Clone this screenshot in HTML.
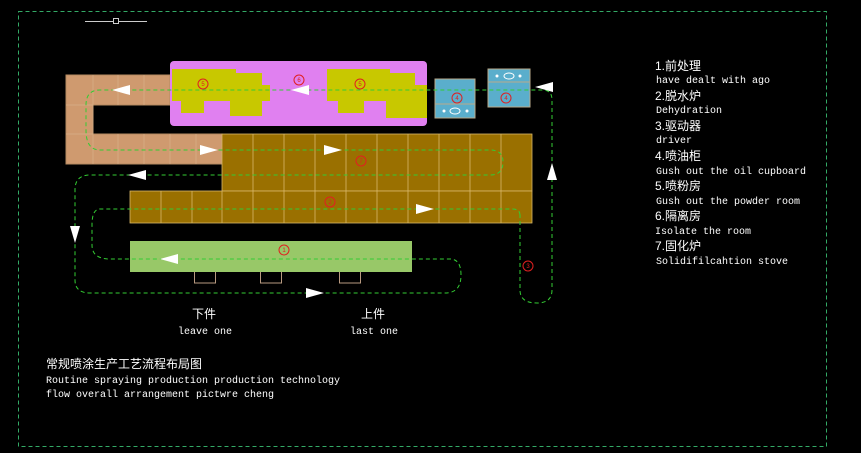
<!DOCTYPE html>
<html><head><meta charset="utf-8"><style>
body{margin:0;background:#000;width:861px;height:453px;overflow:hidden}
svg{display:block}
.m{font-family:"Liberation Mono","Noto Sans CJK SC",monospace;font-size:10px;fill:#fff}
.c{font-family:"Liberation Sans","Noto Sans CJK SC",sans-serif;font-size:12px;fill:#fff}
</style></head><body>
<svg width="861" height="453" viewBox="0 0 861 453">
<rect x="18.5" y="11.5" width="808" height="435" fill="none" stroke="#3a6" stroke-dasharray="4 3"/>
<line x1="85" y1="21.5" x2="147" y2="21.5" stroke="#ccc"/>
<rect x="113.5" y="18.5" width="5" height="5" fill="#000" stroke="#ccc"/>
<!-- tan -->
<path d="M66 75H170V105H93V134H222V164H66Z" fill="#cf9a6f" stroke="#b48a60"/>
<g stroke="#d9b08a" stroke-width="0.7">
<line x1="93" y1="75" x2="93" y2="164"/><line x1="118" y1="75" x2="118" y2="105"/><line x1="144" y1="75" x2="144" y2="105"/>
<line x1="66" y1="105" x2="93" y2="105"/><line x1="66" y1="134" x2="93" y2="134"/>
<line x1="118" y1="134" x2="118" y2="164"/><line x1="144" y1="134" x2="144" y2="164"/><line x1="170" y1="134" x2="170" y2="164"/><line x1="196" y1="134" x2="196" y2="164"/></g>
<!-- pink -->
<rect x="170" y="61" width="257" height="65" rx="4" fill="#e080f0"/>
<path d="M172 69H236V73H262V85H270V101H262V116H230V101H204V113H181V101H172Z" fill="#c8c800"/>
<path d="M327 69H390V73H415V85H427V118H386V101H364V113H338V101H327Z" fill="#c8c800"/>
<!-- brown -->
<rect x="222" y="134" width="310" height="57" fill="#9a7000" stroke="#d9b86a" stroke-width="0.8"/>
<rect x="130" y="191" width="402" height="32" fill="#9a7000" stroke="#d9b86a" stroke-width="0.8"/>
<g stroke="#d9b86a" stroke-width="0.8">
<line x1="253" y1="134" x2="253" y2="223"/><line x1="284" y1="134" x2="284" y2="223"/><line x1="315" y1="134" x2="315" y2="223"/><line x1="346" y1="134" x2="346" y2="223"/><line x1="377" y1="134" x2="377" y2="223"/><line x1="408" y1="134" x2="408" y2="223"/><line x1="439" y1="134" x2="439" y2="223"/><line x1="470" y1="134" x2="470" y2="223"/><line x1="501" y1="134" x2="501" y2="223"/>
<line x1="161" y1="191" x2="161" y2="223"/><line x1="192" y1="191" x2="192" y2="223"/><line x1="222" y1="191" x2="222" y2="223"/></g>
<!-- green -->
<rect x="130" y="241" width="282" height="31" fill="#98c868"/>
<g fill="none" stroke="#b89a80"><path d="M194.5 272V283H215.5V272"/><path d="M260.5 272V283H281.5V272"/><path d="M339.5 272V283H360.5V272"/></g>
<!-- blue -->
<rect x="435" y="79" width="40" height="39" fill="#5aaecc" stroke="#b9a98a"/><line x1="435" y1="104" x2="475" y2="104" stroke="#b9a98a"/>
<rect x="488" y="69" width="42" height="38" fill="#5aaecc" stroke="#b9a98a"/><line x1="488" y1="82" x2="530" y2="82" stroke="#b9a98a"/>
<ellipse cx="455" cy="111" rx="5" ry="3" fill="none" stroke="#fff"/><circle cx="444" cy="111" r="1.5" fill="#fff"/><circle cx="467" cy="111" r="1.5" fill="#fff"/>
<ellipse cx="509" cy="76" rx="5" ry="3" fill="none" stroke="#fff"/><circle cx="497" cy="76" r="1.5" fill="#fff"/><circle cx="520" cy="76" r="1.5" fill="#fff"/>
<!-- path -->
<path d="M520 215Q520 209 512 209L100 209Q92 209 92 225L92 245Q92 259 110 259L450 259Q461 259 461 275Q461 293 445 293L90 293Q75 293 75 280L75 190Q75 175 90 175L490 175Q503 175 503 162Q503 150 490 150L100 150Q86 150 86 130L86 105Q86 90 100 90L543 90Q552 90 552 100L552 290Q552 303 537 303Q520 303 520 290L520 215" fill="none" stroke="#3c3" stroke-dasharray="4 3"/>
<g fill="#fff">
<path d="M112 90L130 85V95Z"/><path d="M291 90L309 85V95Z"/><path d="M535 87L553 82V92Z"/>
<path d="M218 150L200 145V155Z"/><path d="M342 150L324 145V155Z"/>
<path d="M128 175L146 170V180Z"/><path d="M434 209L416 204V214Z"/>
<path d="M160 259L178 254V264Z"/><path d="M324 293L306 288V298Z"/>
<path d="M75 243L70 226H80Z"/><path d="M552 163L547 180H557Z"/></g>
<g fill="none" stroke="#e02020"><circle cx="203" cy="84" r="5"/><circle cx="299" cy="80" r="5"/><circle cx="360" cy="84" r="5"/><circle cx="457" cy="98" r="5"/><circle cx="506" cy="98" r="5"/><circle cx="361" cy="161" r="5"/><circle cx="330" cy="202" r="5"/><circle cx="284" cy="250" r="5"/><circle cx="528" cy="266" r="5"/></g>
<g font-family="Liberation Sans" font-size="6" fill="#e02020" text-anchor="middle"><text x="203" y="86">5</text><text x="299" y="82">6</text><text x="360" y="86">5</text><text x="457" y="100">4</text><text x="506" y="100">4</text><text x="361" y="163">7</text><text x="330" y="204">2</text><text x="284" y="252">1</text><text x="528" y="268">3</text></g>
<!-- labels -->
<text class="c" x="192" y="318">下件</text><text class="c" x="361" y="318">上件</text>
<text class="m" x="178" y="334">leave one</text><text class="m" x="350" y="334">last one</text>
<text class="c" x="46" y="368">常规喷涂生产工艺流程布局图</text>
<text class="m" x="46" y="383">Routine spraying production production technology</text>
<text class="m" x="46" y="397">flow overall arrangement pictwre cheng</text>
<text class="c" x="655" y="70">1.前处理</text><text class="m" x="656" y="83">have dealt with ago</text>
<text class="c" x="655" y="100">2.脱水炉</text><text class="m" x="656" y="113">Dehydration</text>
<text class="c" x="655" y="130">3.驱动器</text><text class="m" x="656" y="143">driver</text>
<text class="c" x="655" y="160">4.喷油柜</text><text class="m" x="656" y="174">Gush out the oil cupboard</text>
<text class="c" x="655" y="190">5.喷粉房</text><text class="m" x="656" y="204">Gush out the powder room</text>
<text class="c" x="655" y="220">6.隔离房</text><text class="m" x="655" y="234">Isolate the room</text>
<text class="c" x="655" y="250">7.固化炉</text><text class="m" x="656" y="264">Solidifilcahtion stove</text>
</svg>
</body></html>
